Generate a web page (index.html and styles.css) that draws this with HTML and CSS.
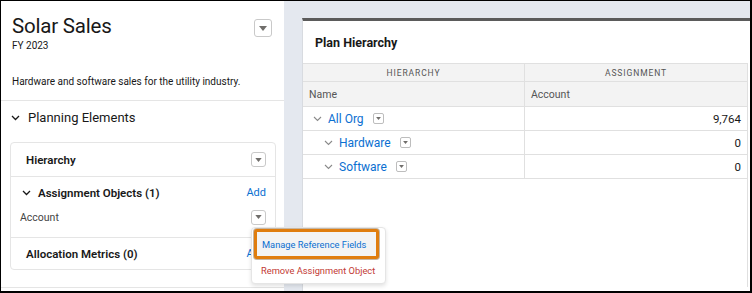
FILE: index.html
```html
<!DOCTYPE html>
<html>
<head>
<meta charset="utf-8">
<link rel="stylesheet" href="styles.css">
</head>
<body>
<div class="frame">
  <aside class="sidebar">
    <div class="head">
      <div class="title-row">
        <div>
          <h1 class="title">Solar Sales</h1>
          <div class="fy">FY 2023</div>
        </div>
        <span class="dd dd-lg"><svg width="8" height="5" viewBox="0 0 8 5"><path d="M0 0h8L4 5z" fill="#706e6b"/></svg></span>
      </div>
      <p class="desc">Hardware and software sales for the utility industry.</p>
    </div>
    <section class="planning">
      <div class="sec-title">
        <svg class="chev" width="9" height="6" viewBox="0 0 9 6"><path d="M1 1l3.5 3.5L8 1" fill="none" stroke="#181818" stroke-width="1.3"/></svg>
        <span>Planning Elements</span>
      </div>
      <div class="elements">
        <div class="el-row">
          <span class="el-name">Hierarchy</span>
          <span class="dd dd-sm"><svg width="7" height="4" viewBox="0 0 8 5"><path d="M0 0h8L4 5z" fill="#706e6b"/></svg></span>
        </div>
        <div class="el-group">
          <div class="el-head">
            <svg class="chev" width="9" height="6" viewBox="0 0 9 6"><path d="M1 1l3.5 3.5L8 1" fill="none" stroke="#181818" stroke-width="1.3"/></svg>
            <span class="el-name">Assignment Objects (1)</span>
            <a class="add">Add</a>
          </div>
          <div class="el-item">
            <span class="item-name">Account</span>
            <span class="dd dd-sm"><svg width="7" height="4" viewBox="0 0 8 5"><path d="M0 0h8L4 5z" fill="#706e6b"/></svg></span>
          </div>
        </div>
        <div class="el-row el-last">
          <span class="el-name">Allocation Metrics (0)</span>
          <a class="add">Add</a>
        </div>
      </div>
    </section>
  </aside>
  <main class="main">
    <div class="card">
      <h2 class="card-title">Plan Hierarchy</h2>
      <div class="grid-wrap">
        <div class="grid">
          <div class="gh gh1">Hierarchy</div>
          <div class="gh gh1">Assignment</div>
          <div class="gh gh2">Name</div>
          <div class="gh gh2">Account</div>

          <div class="gc name lvl0">
            <svg class="tchev" width="9" height="6" viewBox="0 0 9 6"><path d="M1 1l3.5 3.5L8 1" fill="none" stroke="#8a8a8a" stroke-width="1.1"/></svg>
            <a class="link">All Org</a>
            <span class="dd dd-xs"><svg width="5" height="3" viewBox="0 0 8 5"><path d="M0 0h8L4 5z" fill="#706e6b"/></svg></span>
          </div>
          <div class="gc num">9,764</div>

          <div class="gc name lvl1">
            <svg class="tchev" width="9" height="6" viewBox="0 0 9 6"><path d="M1 1l3.5 3.5L8 1" fill="none" stroke="#8a8a8a" stroke-width="1.1"/></svg>
            <a class="link">Hardware</a>
            <span class="dd dd-xs"><svg width="5" height="3" viewBox="0 0 8 5"><path d="M0 0h8L4 5z" fill="#706e6b"/></svg></span>
          </div>
          <div class="gc num">0</div>

          <div class="gc name lvl1">
            <svg class="tchev" width="9" height="6" viewBox="0 0 9 6"><path d="M1 1l3.5 3.5L8 1" fill="none" stroke="#8a8a8a" stroke-width="1.1"/></svg>
            <a class="link">Software</a>
            <span class="dd dd-xs"><svg width="5" height="3" viewBox="0 0 8 5"><path d="M0 0h8L4 5z" fill="#706e6b"/></svg></span>
          </div>
          <div class="gc num">0</div>
        </div>
      </div>
    </div>
  </main>
  <div class="menu">
    <div class="mi mi-focus">Manage Reference Fields</div>
    <div class="mi mi-danger">Remove Assignment Object</div>
  </div>
</div>
</body>
</html>
```

FILE: styles.css
```css
* { box-sizing: border-box; }
html, body { margin: 0; padding: 0; background: #000; }
body { font-family: Roboto, "Liberation Sans", Arial, sans-serif; color: #181818; }

.frame {
  position: relative;
  width: 752px;
  height: 293px;
  border-top: 1px solid #000;
  border-left: 1px solid #000;
  border-right: 2px solid #000;
  border-bottom: 2px solid #000;
  display: flex;
  overflow: hidden;
  background: #fff;
}

.sidebar {
  width: 283px;
  flex: none;
  background: #fff;
  display: flex;
  flex-direction: column;
}

.head {
  padding: 12px 11px 0 11px;
  border-bottom: 1px solid #e5e5e5;
  height: 100px;
}
.title-row { display: flex; justify-content: space-between; align-items: flex-start; }
.title { margin: 0; font-size: 20.5px; font-weight: 400; line-height: 26px; letter-spacing: -0.2px; }
.fy { font-size: 10px; line-height: 14px; color: #181818; }
.desc { margin: 22px 0 0; font-size: 10px; line-height: 14px; color: #181818; }

.dd {
  display: inline-flex;
  align-items: center;
  justify-content: center;
  border: 1px solid #c9c9c9;
  border-radius: 3px;
  background: #fff;
  flex: none;
}
.dd-lg { width: 18px; height: 18px; margin-top: 6px; margin-right: 1px; }
.dd-sm { width: 15px; height: 15px; }
.dd-xs { width: 11px; height: 11px; border-radius: 2px; border-color: #bdbdbd; margin-left: 9px; }

.planning {
  padding: 0 9px;
  height: 187px;
  border-bottom: 1px solid #e5e5e5;
}
.sec-title {
  display: flex;
  align-items: center;
  height: 33px;
  font-size: 13px;
  gap: 8px;
  padding-left: 1px;
}
.chev { flex: none; }

.elements {
  margin-top: 8px;
  border: 1px solid #e5e5e5;
  border-radius: 4px;
  width: 266px;
}
.el-row {
  display: flex;
  align-items: center;
  justify-content: space-between;
  height: 34px;
  padding: 0 9px 0 15px;
  border-bottom: 1px solid #e5e5e5;
}
.el-last { border-bottom: none; height: 31px; }
.el-name { font-size: 11.5px; font-weight: 600; }
.el-group { border-bottom: 1px solid #e5e5e5; height: 61px; }
.el-head {
  display: flex;
  align-items: center;
  height: 31px;
  padding: 0 9px 0 11px;
  gap: 7px;
}
.el-head .add { margin-left: auto; }
.add { color: #0b6fd1; font-size: 11px; }
.el-item {
  display: flex;
  align-items: center;
  justify-content: space-between;
  padding: 0 9px 0 9px;
  height: 18px;
}
.item-name { font-size: 10.5px; color: #444; }

.main {
  flex: 1;
  background: #e4e8ef;
  padding: 17px 0 0 18px;
  overflow: hidden;
}
.card {
  width: 470px;
  height: 300px;
  background: #fff;
  border-top: 3px solid #5b5b5b;
  border-left: 1px solid #d8dbe0;
}
.card-title {
  margin: 0;
  height: 42px;
  display: flex;
  align-items: center;
  padding-left: 12px;
  font-size: 12.5px;
  font-weight: 700;
}
.grid-wrap {
  width: 445px;
  height: 224px;
  border-right: 1px solid #e0e0e0;
  border-top: 1px solid #e0e0e0;
}
.grid {
  display: grid;
  grid-template-columns: 222px 222px;
}
.gh { background: #f3f3f3; color: #555; display: flex; align-items: center; border-bottom: 1px solid #e0e0e0; }
.gh:nth-child(odd) { border-right: 1px solid #e0e0e0; }
.gh1 { height: 18px; justify-content: center; text-transform: uppercase; font-size: 8.5px; letter-spacing: 0.9px; }
.gh2 { height: 25px; padding-left: 6px; font-size: 10.5px; }
.gc {
  height: 24px;
  display: flex;
  align-items: center;
  border-bottom: 1px solid #e0e0e0;
  font-size: 11.5px;
}
.gc.name { border-right: 1px solid #e0e0e0; }
.lvl0 { padding-left: 10px; }
.lvl1 { padding-left: 21px; }
.tchev { margin-right: 6px; }
.link { color: #0b6fd1; font-size: 12px; }
.num { justify-content: flex-end; padding-right: 6px; color: #181818; }

.menu {
  position: absolute;
  left: 250px;
  top: 226px;
  width: 135px;
  height: 57px;
  background: #fff;
  border: 1px solid #e5e5e5;
  border-radius: 4px;
  box-shadow: 0 2px 4px rgba(0,0,0,0.12);
  padding: 1px 6px 0 2px;
}
.mi { font-size: 9.3px; height: 22px; display: flex; align-items: center; padding-left: 7px; white-space: nowrap; }
.mi-focus {
  height: 30px;
  background: #f3f3f3;
  color: #0b6fd1;
  border: 3px solid #e07d0e;
  border-radius: 3px;
  padding-left: 5px;
  box-shadow: 0 0 0 1px rgba(90,50,0,0.35);
}
.mi-danger { color: #c23934; }
```
